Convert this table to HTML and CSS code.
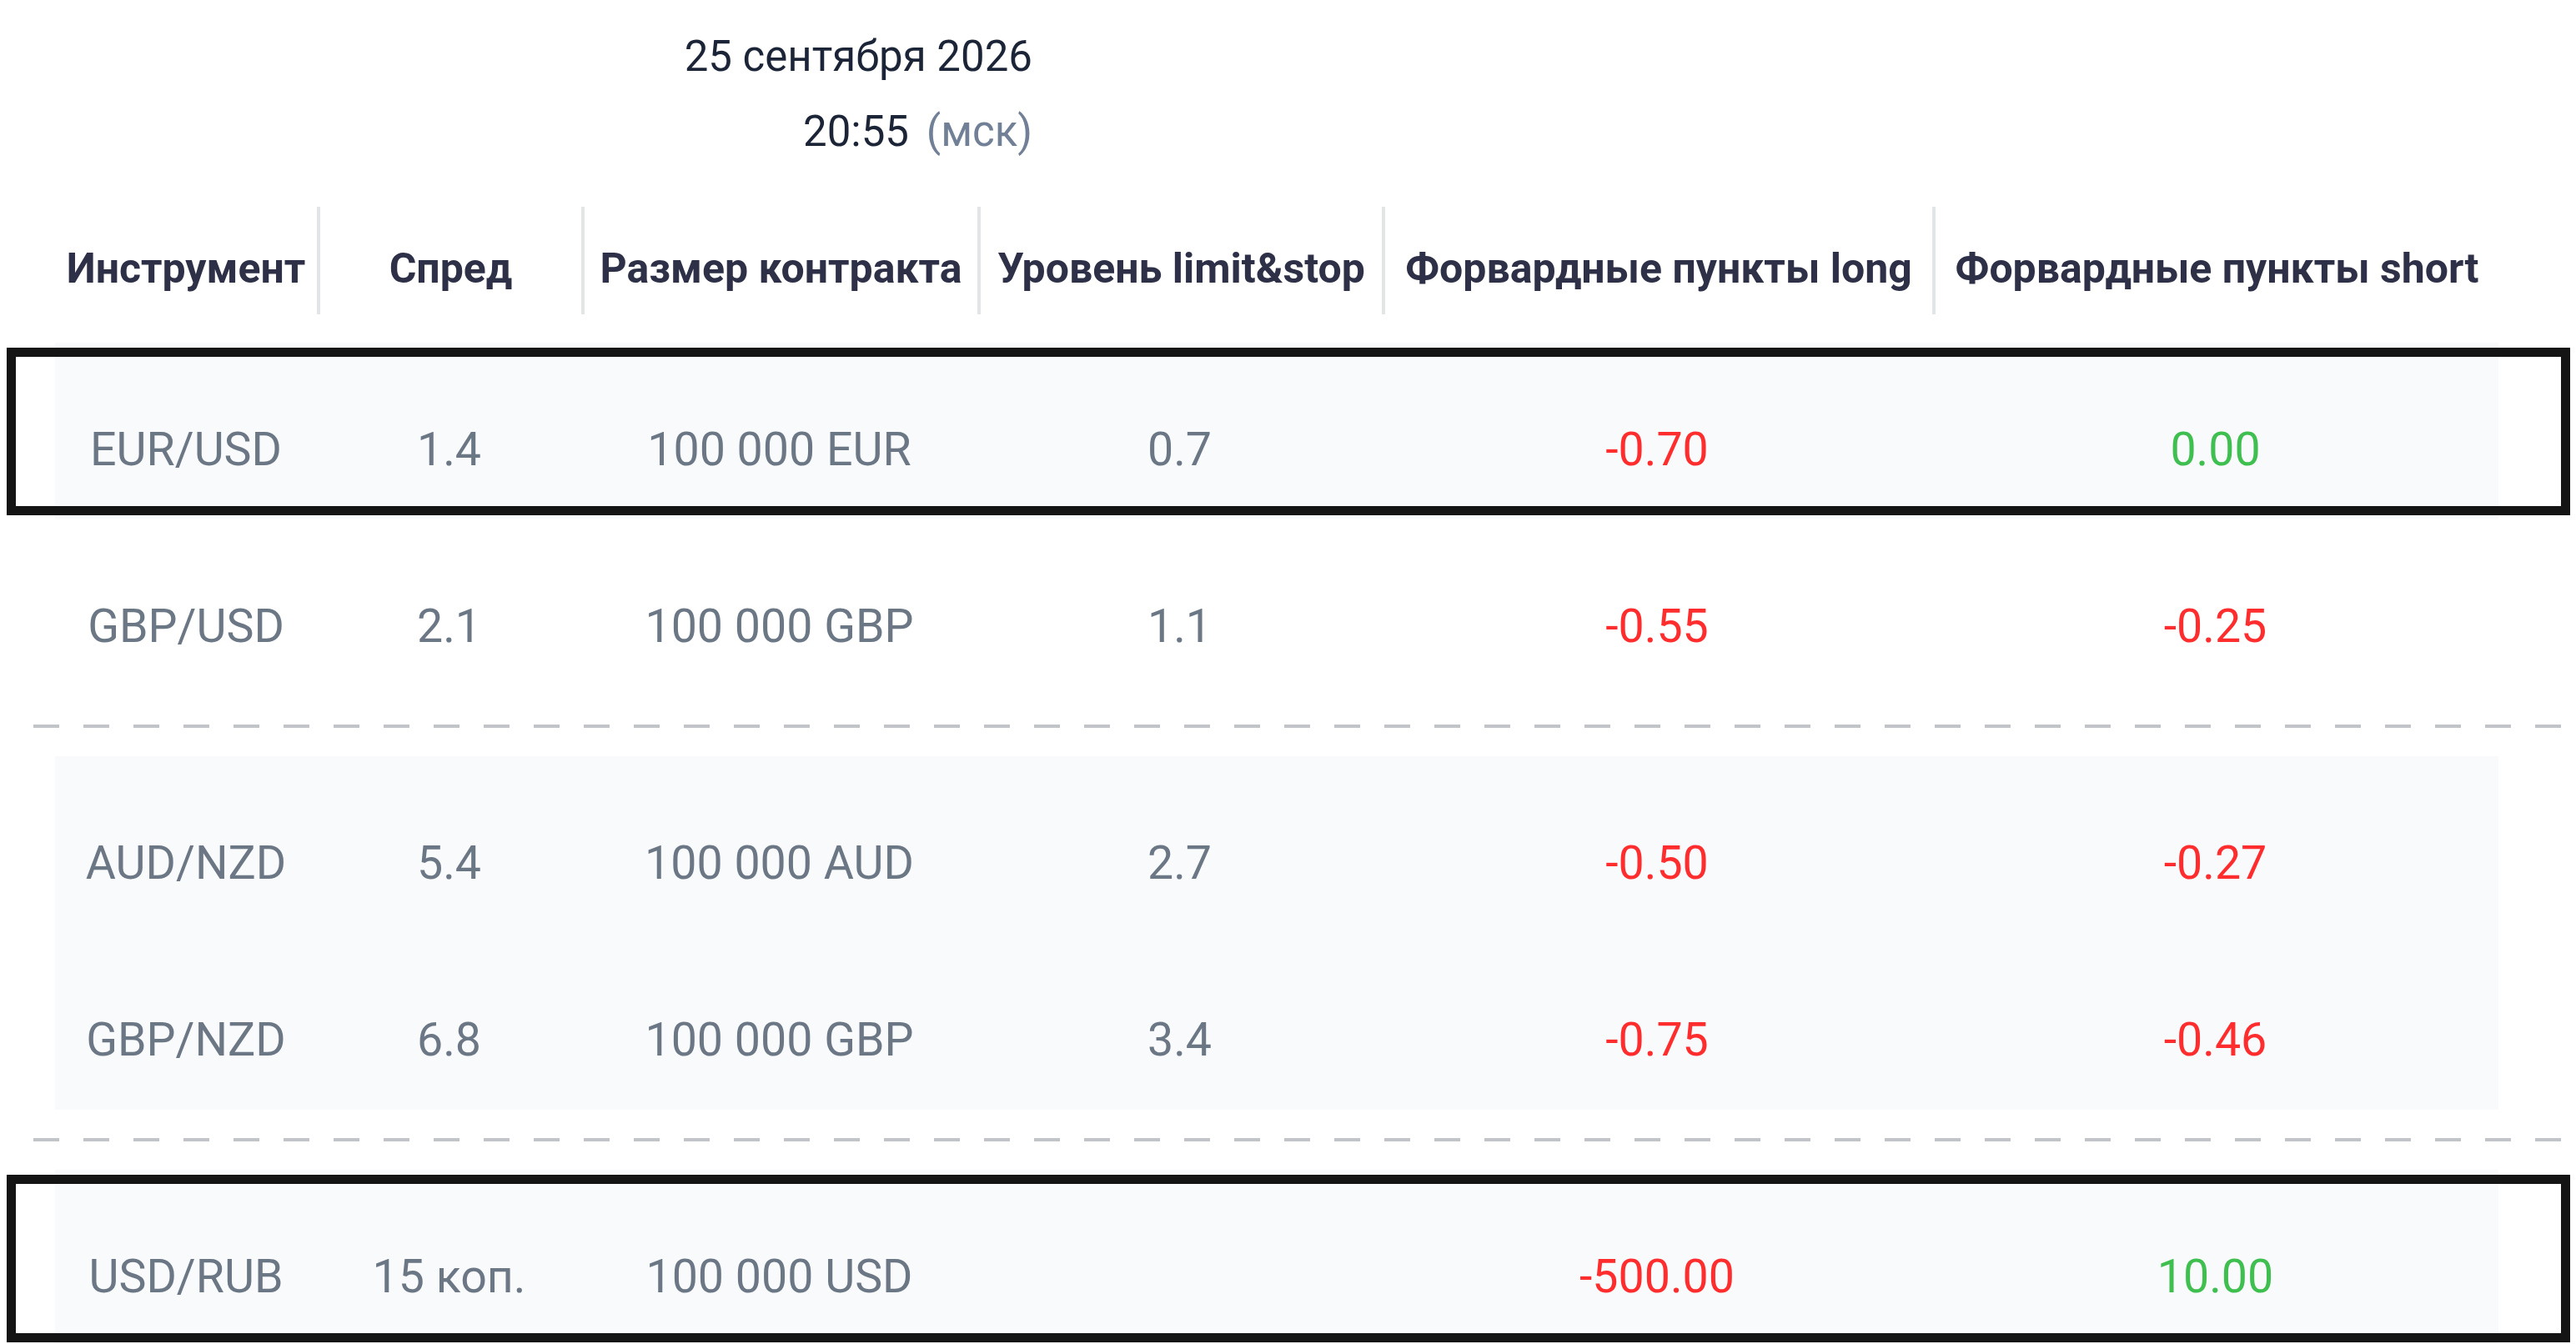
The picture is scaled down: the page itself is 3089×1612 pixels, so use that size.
FILE: index.html
```html
<!DOCTYPE html>
<html lang="ru">
<head>
  <meta charset="UTF-8" />
  <meta name="viewport" content="width=device-width, initial-scale=1" />
  <title>Торговые условия</title>
  <link rel="stylesheet" href="styles.css">
</head>
<body>
  <div class="stamp">
    <div class="stamp-date">25 сентября 2026</div>
    <div class="stamp-time">20:55 <span class="tz">(мск)</span></div>
  </div>

  <div class="quotes">
    <div class="head">
      <div class="cell">Инструмент</div>
      <div class="cell">Спред</div>
      <div class="cell">Размер контракта</div>
      <div class="cell">Уровень limit&amp;stop</div>
      <div class="cell">Форвардные пункты long</div>
      <div class="cell">Форвардные пункты short</div>
    </div>

    <div class="row shaded marked">
      <div class="cell">EUR/USD</div>
      <div class="cell">1.4</div>
      <div class="cell">100 000 EUR</div>
      <div class="cell">0.7</div>
      <div class="cell neg">-0.70</div>
      <div class="cell pos">0.00</div>
    </div>
    <div class="row">
      <div class="cell">GBP/USD</div>
      <div class="cell">2.1</div>
      <div class="cell">100 000 GBP</div>
      <div class="cell">1.1</div>
      <div class="cell neg">-0.55</div>
      <div class="cell neg">-0.25</div>
    </div>

    <div class="divider"></div>

    <div class="row shaded">
      <div class="cell">AUD/NZD</div>
      <div class="cell">5.4</div>
      <div class="cell">100 000 AUD</div>
      <div class="cell">2.7</div>
      <div class="cell neg">-0.50</div>
      <div class="cell neg">-0.27</div>
    </div>
    <div class="row shaded">
      <div class="cell">GBP/NZD</div>
      <div class="cell">6.8</div>
      <div class="cell">100 000 GBP</div>
      <div class="cell">3.4</div>
      <div class="cell neg">-0.75</div>
      <div class="cell neg">-0.46</div>
    </div>

    <div class="divider"></div>

    <div class="row shaded marked">
      <div class="cell">USD/RUB</div>
      <div class="cell">15 коп.</div>
      <div class="cell">100 000 USD</div>
      <div class="cell"></div>
      <div class="cell neg">-500.00</div>
      <div class="cell pos">10.00</div>
    </div>
  </div>
</body>
</html>
```

FILE: styles.css
```css
body {
  font-family: 'Roboto', 'Liberation Sans', sans-serif;
  background: #fff;
  color: #6b7785;
  margin: 0;
  padding: 0;
  overflow: hidden;
}

.stamp {
  width: 1238px;
  padding-top: 23px;
  text-align: right;
  font-size: 51px;
  line-height: 90px;
  color: #1c2537;
}

.tz {
  color: #718096;
  margin-left: 8px;
}

.quotes {
  margin: 45px 0 0 66px;
  width: 2930px;
}

.head, .row {
  display: grid;
  grid-template-columns: 314px 317px 475px 485px 660px 679px;
  position: relative;
}

.cell {
  text-align: center;
  white-space: nowrap;
}

.head .cell {
  font-size: 50px;
  font-weight: 700;
  line-height: 62px;
  color: #2d3047;
  padding: 43px 0 24px;
}

.head .cell + .cell {
  border-left: 4px solid #e2e5e8;
}

.head {
  margin-bottom: 34px;
}

.row {
  height: 212px;
  box-sizing: border-box;
  padding-top: 101px;
  font-size: 55.5px;
  line-height: 56px;
}

.shaded {
  background: #f9fafc;
}

/* black outline over highlighted rows */
.marked::after {
  content: '';
  position: absolute;
  left: -58px;
  right: -86px;
  top: 6px;
  bottom: 5px;
  border: 11px solid #141414;
  pointer-events: none;
}

.neg {
  color: #ff2d2d;
}

.pos {
  color: #3fbf4f;
}

.divider {
  height: 4px;
  margin: 34px 0 34px -26px;
  width: 3040px;
  background: repeating-linear-gradient(to right, #c1c4c9 0, #c1c4c9 31px, transparent 31px, transparent 60px);
}
```
